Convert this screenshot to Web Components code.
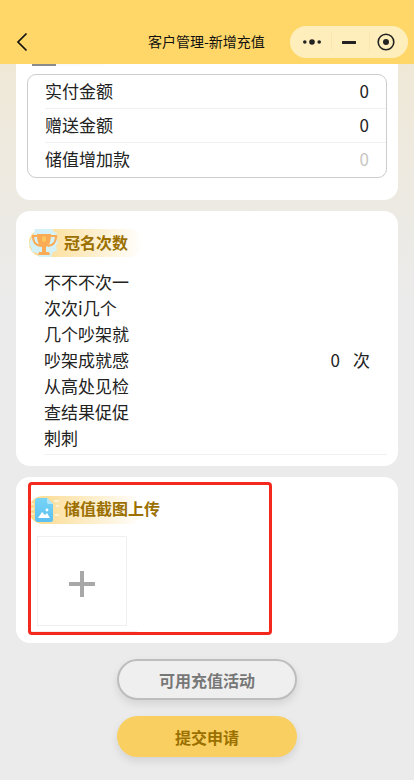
<!DOCTYPE html>
<html lang="zh">
<head>
<meta charset="utf-8">
<title>客户管理-新增充值</title>
<style>
  html, body { margin: 0; padding: 0; }
  body {
    width: 414px;
    height: 780px;
    overflow: hidden;
    position: relative;
    font-family: "Noto Sans CJK SC", "Liberation Sans", sans-serif;
    color: #222;
    background: linear-gradient(#f1e8d2 0, #ebebeb 300px);
  }
</style>
</head>
<body>
<nav-bar title="客户管理-新增充值"></nav-bar>
<page-main>
  <info-card class="first" cut>
    <amount-box>
      <amount-row label="实付金额" value="0"></amount-row>
      <amount-row label="赠送金额" value="0"></amount-row>
      <amount-row label="储值增加款" value="0" muted></amount-row>
    </amount-box>
  </info-card>

  <info-card class="second" heading="冠名次数" icon="cup">
    <count-row value="0" unit="次">不不不次一次次i几个几个吵架就吵架成就感从高处见检查结果促促刺刺</count-row>
  </info-card>

  <info-card class="third" heading="储值截图上传" icon="image">
    <upload-box></upload-box>
  </info-card>

  <action-button>可用充值活动</action-button>
  <action-button primary>提交申请</action-button>
</page-main>
<mark-frame></mark-frame>

<script>
class NavBar extends HTMLElement {
  connectedCallback () {
    this.attachShadow({ mode: 'open' }).innerHTML = `
      <style>
        :host { display: flex; height: 64px; box-sizing: border-box; padding: 26px 6px 0 16px; background: #ffd768; align-items: flex-start; }
        .back { width: 12px; height: 20px; margin-top: 6px; flex: none; }
        h1 { margin: 0; flex: 1; padding-left: 120px; font-size: 14px; font-weight: 400; line-height: 30px; color: #111; white-space: nowrap; }
        .capsule { flex: none; width: 118px; height: 32px; box-sizing: border-box; border-radius: 16px; background: #fdeebb; display: flex; align-items: center; }
        .capsule span { display: flex; justify-content: center; align-items: center; box-sizing: border-box; height: 18px; }
        .capsule span + span { border-left: 1px solid #f8e6ae; }
        .more { width: 41px; padding-left: 3px; }
        .min { width: 38px; padding-right: 3px; }
        .close { width: 39px; padding-right: 7px; }
      </style>
      <svg class="back" viewBox="0 0 12 20"><path d="M10.5 1.5 2 10l8.500 8.500" fill="none" stroke="#111" stroke-width="1.700"/></svg>
      <h1>${this.getAttribute('title')}</h1>
      <div class="capsule">
        <span class="more"><svg width="18" height="8" viewBox="0 0 18 8" fill="#222"><circle cx="1.800" cy="4" r="1.800"/><circle cx="9" cy="4" r="2.800"/><circle cx="16.200" cy="4" r="1.800"/></svg></span>
        <span class="min"><svg width="14" height="3" viewBox="0 0 14 3" fill="#222"><rect width="14" height="3" rx=".5"/></svg></span>
        <span class="close"><svg width="18" height="18" viewBox="0 0 18 18"><circle cx="9" cy="9" r="7.800" fill="none" stroke="#222" stroke-width="1.600"/><circle cx="9" cy="9" r="3" fill="#222"/></svg></span>
      </div>`
  }
}

class PageMain extends HTMLElement {
  connectedCallback () {
    this.attachShadow({ mode: 'open' }).innerHTML = `
      <style>
        :host { display: flex; flex-direction: column; align-items: center; padding: 0 16px; }
        ::slotted(info-card) { align-self: stretch; margin-bottom: 11px; }
        ::slotted(info-card.third) { margin-bottom: 16px; }
        ::slotted(action-button) { margin-bottom: 16px; }
      </style>
      <slot></slot>`
  }
}

const icons = {
  cup: `<svg width="30" height="28" viewBox="0 0 30 28">
    <path d="M6 0h17l2 3 3 1-1 4 2 5-2 4 1 5-4 1-2 5H10l-2-4-5-1-1-5-2-3 2-5 2-3z" fill="#d5f1f8"/>
    <path d="M8 7H4c0 6 2 9 8 10M22 7h5c0 6-2 9-8 10" fill="none" stroke="#f9ab55" stroke-width="2.200"/>
    <path d="M8 5h14c0 8-2 12-5 13v5h3l1 3H9l1-3h3v-5C10 17 8 13 8 5z" fill="#f9ab55"/>
    <ellipse cx="15" cy="10" rx="2" ry="3" fill="#fdc860"/>
  </svg>`,
  image: `<svg width="30" height="28" viewBox="0 0 30 28">
    <defs><linearGradient id="doc" x1="0" y1="0" x2="0" y2="1"><stop offset="0" stop-color="#76d4f6"/><stop offset="1" stop-color="#5cc0f0"/></linearGradient></defs>
    <path d="M25 5h5M27 10h3M26 19h4M1 8h4M1 13h4M1 18h4" stroke="#fff" stroke-width="1.500" opacity=".7"/>
    <path d="M9 2h9l6 6v16a2 2 0 0 1-2 2H9a3 3 0 0 1-3-3V5a3 3 0 0 1 3-3z" fill="url(#doc)"/>
    <path d="M18 2l6 6h-4a2 2 0 0 1-2-2z" fill="#b4e8fa"/>
    <path d="M9 22l4-6 3 3 2-2 3 5z" fill="#fff"/><circle cx="18" cy="14" r="1.400" fill="#fff"/>
  </svg>`
}

class InfoCard extends HTMLElement {
  connectedCallback () {
    const heading = this.getAttribute('heading')
    const head = heading
      ? `<div class="title"><span class="icon">${icons[this.getAttribute('icon')]}</span><h2>${heading}</h2></div>`
      : ''
    const cut = this.hasAttribute('cut') ? '<div class="cut"></div>' : ''
    this.attachShadow({ mode: 'open' }).innerHTML = `
      <style>
        :host { display: block; box-sizing: border-box; background: #fff; border-radius: 14px; padding: 18px 11px 11px; }
        :host([cut]) { border-radius: 0 0 14px 14px; padding: 0 11px 22px; }
        :host(.third) { padding: 19px 11px 11px; }
        .cut { width: 24px; height: 2px; margin: 0 0 8px 5px; background: #8b8b8b; box-shadow: 24px 0 0 #fafafa, 48px 0 0 #fcfcfc; }
        .title { display: flex; align-items: center; width: 114px; height: 28px; margin: 0 0 0 2px; border-radius: 14px; background: linear-gradient(90deg, #fbd98a, #fff 100%); }
        .icon { width: 30px; height: 28px; flex: none; }
        h2 { margin: 0 0 2px 5px; font-size: 16px; line-height: 26px; font-weight: 700; color: #9b7000; white-space: nowrap; }
        :host(.third) h2 { margin-bottom: 4px; }
      </style>
      ${cut}${head}<slot></slot>`
  }
}

class AmountBox extends HTMLElement {
  connectedCallback () {
    this.attachShadow({ mode: 'open' }).innerHTML = `
      <style>
        :host { display: block; border: 1px solid #ccc; border-radius: 9px; padding-left: 17px; overflow: hidden; }
        ::slotted(amount-row:last-child) { border-bottom: 0; }
      </style>
      <slot></slot>`
  }
}

class AmountRow extends HTMLElement {
  connectedCallback () {
    const muted = this.hasAttribute('muted')
    this.attachShadow({ mode: 'open' }).innerHTML = `
      <style>
        :host { display: flex; justify-content: space-between; box-sizing: border-box; height: 34px; border-bottom: 1px solid #f1f1f1; padding-right: 17px; font-size: 17px; line-height: 32px; color: #222; }
        b { font-weight: 400; color: ${muted ? '#c8c6c0' : '#222'}; }
      </style>
      <span>${this.getAttribute('label')}</span><b>${this.getAttribute('value')}</b>`
  }
}

class CountRow extends HTMLElement {
  connectedCallback () {
    this.attachShadow({ mode: 'open' }).innerHTML = `
      <style>
        :host { display: flex; align-items: center; justify-content: space-between; margin: 12px 0 0 17px; padding: 0 17px 3px 0; border-bottom: 1px solid #f1f1f1; font-size: 17px; line-height: 26px; color: #222; }
        .name { width: 86px; word-break: break-all; }
        .value { display: flex; gap: 13px; }
      </style>
      <div class="name"><slot></slot></div>
      <div class="value"><span>${this.getAttribute('value')}</span><span>${this.getAttribute('unit')}</span></div>`
  }
}

class UploadBox extends HTMLElement {
  connectedCallback () {
    this.attachShadow({ mode: 'open' }).innerHTML = `
      <style>
        :host { display: block; margin: 12px 0 0; }
        .box { display: flex; align-items: center; justify-content: center; box-sizing: border-box; width: 90px; height: 90px; margin-left: 10px; border: 1px solid #f0f0f0; }
        svg { margin-top: 6px; }
        .line { width: 110px; height: 1px; margin-top: 5px; background: #f3eded; }
      </style>
      <div class="box">
        <svg width="26" height="26" viewBox="0 0 26 26" fill="#a8a8a8"><rect x="11" y="0" width="4" height="26"/><rect x="0" y="11" width="26" height="4"/></svg>
      </div>
      <div class="line"></div>`
  }
}

class ActionButton extends HTMLElement {
  connectedCallback () {
    const primary = this.hasAttribute('primary')
    this.attachShadow({ mode: 'open' }).innerHTML = `
      <style>
        :host { display: block; }
        button {
          display: block; box-sizing: border-box; width: 180px; height: 41px; padding: 0; border-radius: 21px;
          font: 700 16px/1 "Noto Sans CJK SC", "Liberation Sans", sans-serif;
          border: ${primary ? '0' : '2px solid #bdbdbd'};
          background: ${primary ? '#f8cf60' : '#efefef'};
          color: ${primary ? '#9b7000' : '#777'};
          box-shadow: 0 4px 8px rgba(0, 0, 0, .1);
        }
      </style>
      <button type="button"><slot></slot></button>`
  }
}

// the red box drawn over the screenshot
class MarkFrame extends HTMLElement {
  connectedCallback () {
    this.attachShadow({ mode: 'open' }).innerHTML = `
      <style>
        :host { position: absolute; left: 28px; top: 482px; width: 244px; height: 153px; box-sizing: border-box; border: 3px solid #f5281e; border-radius: 4px; }
      </style>`
  }
}

customElements.define('nav-bar', NavBar)
customElements.define('page-main', PageMain)
customElements.define('info-card', InfoCard)
customElements.define('amount-box', AmountBox)
customElements.define('amount-row', AmountRow)
customElements.define('count-row', CountRow)
customElements.define('upload-box', UploadBox)
customElements.define('action-button', ActionButton)
customElements.define('mark-frame', MarkFrame)
</script>
</body>
</html>
